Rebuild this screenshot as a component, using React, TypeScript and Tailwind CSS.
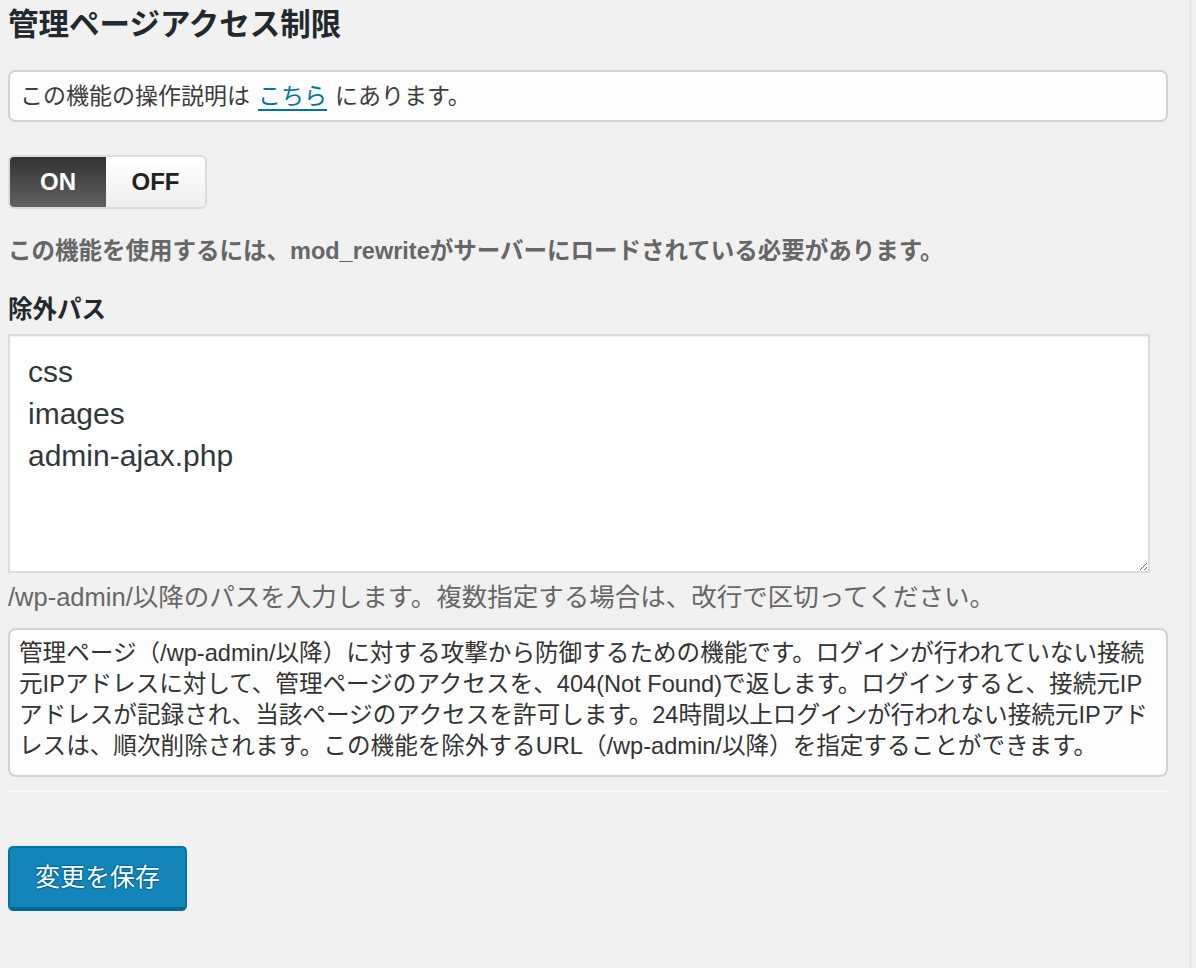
import React from "react";

const JP = "font-['Liberation_Sans','Noto_Sans_CJK_JP',sans-serif]";

const DESCRIPTION = [
  "管理ページ（/wp-admin/以降）に対する攻撃から防御するための機能です。ログインが行われていない接続",
  "元IPアドレスに対して、管理ページのアクセスを、404(Not Found)で返します。ログインすると、接続元IP",
  "アドレスが記録され、当該ページのアクセスを許可します。24時間以上ログインが行われない接続元IPアド",
  "レスは、順次削除されます。この機能を除外するURL（/wp-admin/以降）を指定することができます。",
];

function Toggle() {
  return (
    <div className="mt-[33px] flex h-[54px] w-[199px] overflow-hidden rounded-[6px] border-2 border-[#dcdcdc]">
      <button
        type="button"
        className="flex w-[96px] items-center justify-center bg-gradient-to-b from-[#333333] to-[#616161] font-['Liberation_Sans',sans-serif] text-[24px] font-bold text-white"
      >
        ON
      </button>
      <button
        type="button"
        className="flex flex-1 items-center justify-center bg-gradient-to-b from-[#ffffff] to-[#efefef] font-['Liberation_Sans',sans-serif] text-[24px] font-bold text-[#222]"
      >
        OFF
      </button>
    </div>
  );
}

export default function App() {
  return (
    <div className={`flex min-h-screen w-full bg-[#f1f1f1] ${JP}`}>
      <div className="w-[1190px] shrink-0 pl-[8px]">
        <div className="w-[1160px]">
          <h1 className="pt-[6px] text-[30.5px] font-bold leading-[36px] text-[#23282d]">
            管理ページアクセス制限
          </h1>

          {/* notice */}
          <div className="mt-[28px] flex h-[52px] items-center rounded-[7px] border-2 border-[#d2d2d2] bg-[#fdfdfd] pl-[10px] text-[23px] leading-[30px] text-[#3c3c3c]">
            この機能の操作説明は{" "}
            <a href="#" className="mx-[8px] text-[#0073aa] underline underline-offset-[5px]">
              こちら
            </a>{" "}
            にあります。
          </div>

          <Toggle />

          <p className="mt-[27px] text-[23.5px] font-bold leading-[30px] text-[#666]">
            この機能を使用するには、mod_rewriteがサーバーにロードされている必要があります。
          </p>

          <h2 className="mt-[28px] text-[24.5px] font-bold leading-[32px] text-[#23282d]">
            除外パス
          </h2>

          <textarea
            readOnly
            defaultValue={"css\nimages\nadmin-ajax.php"}
            className="mt-[8px] block h-[239px] w-[1142px] border-2 border-[#dddddd] bg-white px-[18px] pt-[15px] font-['Liberation_Sans',sans-serif] text-[30px] leading-[42px] text-[#32373c] shadow-[inset_0_1px_2px_rgba(0,0,0,0.07)] outline-none"
          />

          <p className="mt-[9px] text-[25.5px] leading-[30px] text-[#666]">
            /wp-admin/以降のパスを入力します。複数指定する場合は、改行で区切ってください。
          </p>

          {/* description */}
          <div className="mt-[16px] rounded-[8px] border-2 border-[#d2d2d2] bg-[#fdfdfd] pb-[13px] pl-[9px] pt-[8px] text-[23.6px] leading-[31px] text-[#333]">
            {DESCRIPTION.map((line) => (
              <div key={line} className="whitespace-nowrap">
                {line}
              </div>
            ))}
          </div>

          <div className="mt-[13px] h-[2px] bg-[#fafafa]" />

          <button
            type="button"
            className="mt-[54px] flex h-[65px] w-[179px] items-center justify-center rounded-[5px] border-2 border-b-[4px] border-[#0073aa] border-b-[#006799] bg-[#1385b9] text-[25px] text-white [text-shadow:0_-1px_1px_#006799,1px_0_1px_#006799,0_1px_1px_#006799,-1px_0_1px_#006799]"
          >
            変更を保存
          </button>
        </div>
      </div>
      <div className="w-px shrink-0 bg-[#e4e4e4]" />
      <div className="flex-1" />
    </div>
  );
}
